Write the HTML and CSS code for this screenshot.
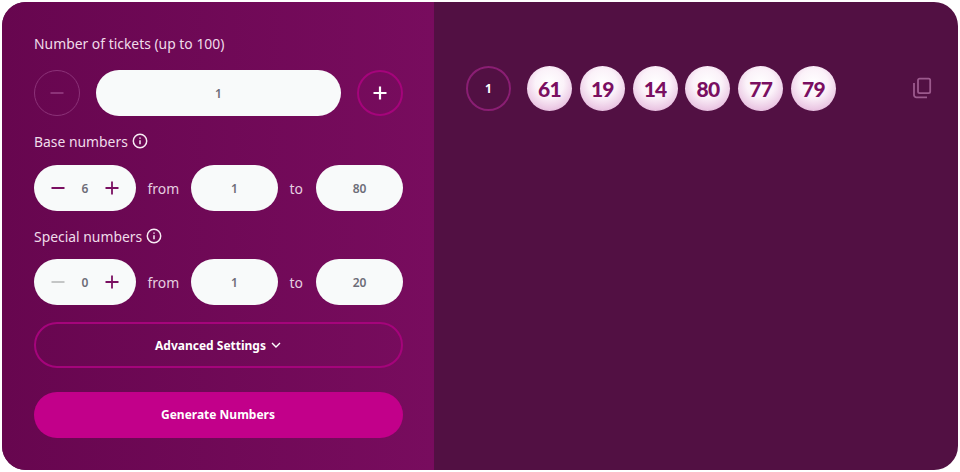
FILE: index.html
```html
<!DOCTYPE html>
<html lang="en">
<head>
<meta charset="utf-8">
<title>Number Generator</title>
<link rel="stylesheet" href="styles.css">
</head>
<body>
<main class="card">
  <section class="form">
    <div class="label label-first">Number of tickets (up to 100)</div>
    <div class="row tickets">
      <button class="round round-off"><svg class="ic" viewBox="0 0 16 16"><path d="M1.5 8h13"/></svg></button>
      <div class="pill">1</div>
      <button class="round round-on"><svg class="ic" viewBox="0 0 16 16"><path d="M1.5 8h13M8 1.5v13"/></svg></button>
    </div>
    <div class="label">Base numbers <svg class="info" viewBox="0 0 16 16"><circle cx="8" cy="8" r="6.7"/><path d="M8 7.3v4"/><path d="M8 4.4v1.3"/></svg></div>
    <div class="row range">
      <div class="stepper">
        <svg class="ic step" viewBox="0 0 16 16"><path d="M1.5 8h13"/></svg>
        <span>6</span>
        <svg class="ic step" viewBox="0 0 16 16"><path d="M1.5 8h13M8 1.5v13"/></svg>
      </div>
      <span class="word">from</span>
      <div class="pill small">1</div>
      <span class="word">to</span>
      <div class="pill small last">80</div>
    </div>
    <div class="label label-tight">Special numbers <svg class="info" viewBox="0 0 16 16"><circle cx="8" cy="8" r="6.7"/><path d="M8 7.3v4"/><path d="M8 4.4v1.3"/></svg></div>
    <div class="row range">
      <div class="stepper">
        <svg class="ic step step-off" viewBox="0 0 16 16"><path d="M1.5 8h13"/></svg>
        <span>0</span>
        <svg class="ic step" viewBox="0 0 16 16"><path d="M1.5 8h13M8 1.5v13"/></svg>
      </div>
      <span class="word">from</span>
      <div class="pill small">1</div>
      <span class="word">to</span>
      <div class="pill small last">20</div>
    </div>
    <button class="btn advanced">Advanced Settings <svg class="chev" viewBox="0 0 10 6"><path d="M1 1l4 4 4-4"/></svg></button>
    <button class="btn generate">Generate Numbers</button>
  </section>
  <section class="results">
    <div class="ticket">1</div>
    <div class="balls">
      <div class="ball">61</div>
      <div class="ball">19</div>
      <div class="ball">14</div>
      <div class="ball">80</div>
      <div class="ball">77</div>
      <div class="ball">79</div>
    </div>
    <svg class="copy" viewBox="0 0 20 22"><rect x="6" y="1.6" width="12.2" height="14.6" rx="1.6"/><path d="M2 6v12a2.4 2.4 0 0 0 2.4 2.4h10.6"/></svg>
  </section>
</main>
</body>
</html>
```

FILE: styles.css
```css
* { box-sizing: border-box; }
html, body { margin: 0; height: 100%; background: #fff; }
body { padding: 2px; font-family: "Noto Sans", sans-serif; }
.card {
  display: flex;
  width: 956px;
  height: 468px;
  border-radius: 24px;
  overflow: hidden;
  background: #521043;
}
.form {
  width: 432px;
  flex: none;
  padding: 30px 31px 0 32px;
  display: flex;
  flex-direction: column;
  background: linear-gradient(90deg, #67064f 0%, #780c5e 100%);
}
.label {
  display: flex;
  align-items: center;
  gap: 4px;
  height: 24px;
  padding-bottom: 2px;
  margin: 14px 0 11px;
  font-size: 13.9px;
  color: #f0dcea;
}
.label-first { margin: 0 0 14px; }
.label-tight { margin: 14px 0 10px; }
.row { display: flex; align-items: center; height: 46px; flex: none; }
.tickets { justify-content: space-between; }
.range { gap: 11.6px; }
.last { margin-left: auto; }
.round {
  width: 46px;
  height: 46px;
  padding: 0;
  border-radius: 50%;
  background: transparent;
  display: flex;
  align-items: center;
  justify-content: center;
}
.round-off { border: 1px solid #8c3278; color: #8c3278; }
.round-on { border: 2px solid #a5047b; color: #fff; }
.round-on .ic { stroke-width: 2.2; }
.ic { width: 16px; height: 16px; fill: none; stroke: currentColor; stroke-width: 1.8; }
.pill {
  background: #f8fafa;
  border-radius: 23px;
  height: 46px;
  width: 245px;
  padding-top: 1px;
  display: flex;
  align-items: center;
  justify-content: center;
  font-size: 12px;
  font-weight: 600;
  color: #6d6d78;
}
.small { width: 87px; padding-top: 0; }
.word { font-size: 13.9px; color: #e6cfe0; }
.stepper {
  width: 102px;
  height: 46px;
  background: #f8fafa;
  border-radius: 23px;
  display: flex;
  align-items: center;
  justify-content: space-between;
  padding: 0 16px;
  font-size: 12px;
  font-weight: 600;
  color: #6d6d78;
}
.step { color: #7a0f61; }
.step-off { color: #c4c6c6; }
.info { width: 16px; height: 16px; fill: none; stroke: #f7ecf4; stroke-width: 1.5; }
.btn {
  width: 100%;
  height: 46px;
  flex: none;
  border-radius: 23px;
  font-family: "Noto Sans", sans-serif;
  font-size: 12px;
  font-weight: 700;
  color: #fff;
  display: flex;
  align-items: center;
  justify-content: center;
  gap: 5px;
  padding: 0 1px 0 0;
}
.advanced { margin-top: 17px; background: transparent; border: 2px solid #a5047b; }
.generate { margin-top: 24px; padding-bottom: 2px; background: #c2008a; border: 0; }
.chev { width: 10px; height: 6px; fill: none; stroke: #fff; stroke-width: 1.4; }
.results {
  flex: 1;
  display: flex;
  align-items: flex-start;
  padding: 64px 26px 0 32px;
}
.ticket {
  width: 45px;
  height: 45px;
  flex: none;
  border-radius: 50%;
  border: 2px solid #8a1e73;
  display: flex;
  align-items: center;
  justify-content: center;
  color: #fff;
  font-size: 12px;
  font-weight: 700;
}
.balls { display: flex; gap: 7.8px; margin-left: 16px; }
.ball {
  width: 45px;
  height: 45px;
  border-radius: 50%;
  background: radial-gradient(circle at 50% 38%, #fff 0%, #fbf2f9 40%, #ebc8e4 72%, #cc8fc0 100%);
  display: flex;
  align-items: center;
  justify-content: center;
  font-family: "Lato", sans-serif;
  font-size: 21px;
  font-weight: 900;
  letter-spacing: -0.8px;
  color: #7a0f61;
}
.copy {
  width: 20px;
  height: 22px;
  margin: 11px 0 0 auto;
  fill: none;
  stroke: #9c5a8d;
  stroke-width: 1.8;
}
```
